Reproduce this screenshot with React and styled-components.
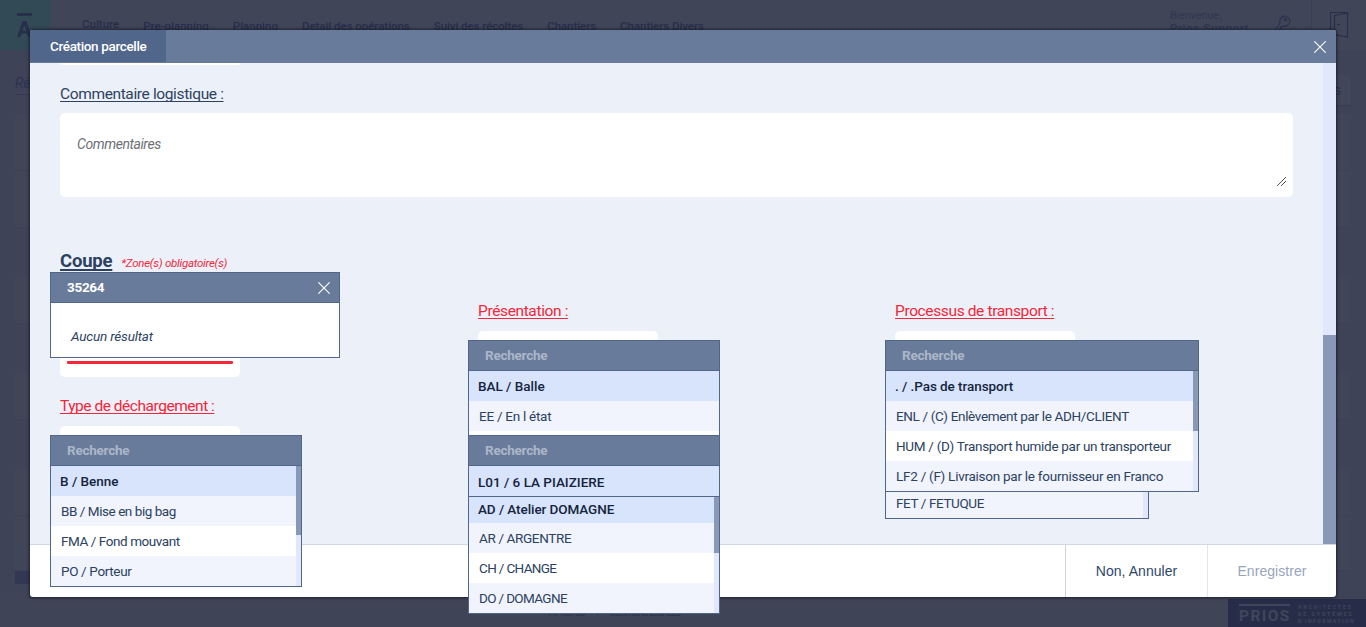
import React from "react";
import styled, { createGlobalStyle, css } from "styled-components";

const GlobalStyle = createGlobalStyle`
  * { box-sizing: border-box; }
  html, body { margin: 0; height: 100%; overflow: hidden; }
  body { font-family: Roboto, "Open Sans", sans-serif; background: #3e4357; color: #2c4261; }
`;

const Page = styled.div`
  position: relative;
  height: 627px;
  width: 1366px;
  overflow: hidden;
  display: flex;
  flex-direction: column;
  background: #3e4357;
`;

/* Dimmed application behind the dialog */
const TopBar = styled.header`
  height: 50px;
  flex: none;
  display: flex;
  background: #404558;
  color: #272d4b;
`;
const Logo = styled.div`
  width: 50px;
  height: 50px;
  background: #324a56;
  margin-right: 32px;
  svg { display: block; }
`;
const Nav = styled.nav`
  display: flex;
  gap: 24px;
  flex: 1;
`;
const NavItem = styled.span`
  font-size: 11.5px;
  font-weight: 500;
  line-height: 16px;
  white-space: nowrap;
  letter-spacing: ${(p) => p.$spacing || 0}px;
  padding-top: ${(p) => (p.$active ? 16 : 18)}px;
`;
const Welcome = styled.div`
  width: 105px;
  padding-top: 9px;
  font: 10px/13px "Liberation Sans", sans-serif;
  letter-spacing: 0.2px;
  color: #2f3550;
  b { display: block; font-size: 11px; letter-spacing: 0.45px; }
`;
const KeyCell = styled.div`
  width: 36px;
  padding-top: 15px;
`;
const DoorCell = styled.div`
  width: 55px;
  border-left: 1px solid #3a3f53;
  padding: 12px 0 0 18px;
`;
const Toolbar = styled.div`
  height: 64px;
  flex: none;
  display: flex;
  justify-content: space-between;
  padding: 25px 15px 0;
`;
const SearchHint = styled.div`
  width: 160px;
  height: 20px;
  border-bottom: 1px solid #343951;
  font-style: italic;
  font-size: 14px;
  line-height: 17px;
  color: #2e3350;
`;
const ToolButton = styled.div`
  width: 90px;
  height: 30px;
  border-radius: 2px;
  background: #414659;
  box-shadow: 0 1px 1px #363b4e;
  text-align: right;
  padding-right: 10px;
  font: 14px/31px "Liberation Sans", sans-serif;
  color: #2a304c;
`;
const Backlog = styled.div`
  flex: 1;
  padding: 0 15px;
`;
const Card = styled.div`
  height: ${(p) => p.$height}px;
  margin-bottom: ${(p) => p.$gap || 0}px;
  background: #414558;
  border-bottom: 1px solid #3c4154;
`;
const Strip = styled.div`
  height: 13px;
  width: 600px;
  background: #323754;
`;
const PageFooter = styled.footer`
  height: 28px;
  flex: none;
  display: flex;
  justify-content: flex-end;
  background: #404457;
`;
const Legal = styled.div`
  display: flex;
  gap: 12px;
  flex: 1;
  padding: 8px 0 0 549px;
  font-size: 8.5px;
  line-height: 12px;
  letter-spacing: -0.6px;
  white-space: nowrap;
  color: #2c314b;
`;
const Brand = styled.div`
  width: 138px;
  background: #272d48;
  color: #40465b;
  display: flex;
  gap: 8px;
  padding: 5px 0 0 11px;
`;
const BrandName = styled.div`
  width: 51px;
  border-top: 2px solid #40465b;
  font-size: 15.5px;
  font-weight: 700;
  line-height: 20px;
  letter-spacing: 1.4px;
`;
const BrandTag = styled.div`
  font-size: 5px;
  font-weight: 700;
  line-height: 7px;
  letter-spacing: 1.5px;
  white-space: nowrap;
  span { display: block; }
  span:nth-child(1) { letter-spacing: 2px; }
  span:nth-child(2) { letter-spacing: 2.1px; }
`;

/* Dialog */
const Dialog = styled.section`
  position: absolute;
  left: 30px;
  top: 30px;
  width: 1306px;
  height: 567px;
  border-radius: 3px;
  background: #fff;
  box-shadow: 0 0 3px 1px rgba(20, 22, 32, 0.75);
  display: flex;
  flex-direction: column;
`;
const DialogHeader = styled.div`
  height: 33px;
  flex: none;
  display: flex;
  justify-content: space-between;
  background: #687b9b;
  border-radius: 2px 2px 0 0;
`;
const DialogTab = styled.div`
  width: 136px;
  height: 32px;
  padding-left: 20px;
  background: #50668b;
  color: #fff;
  font-size: 13.5px;
  font-weight: 500;
  line-height: 33px;
  letter-spacing: -0.35px;
  border-radius: 2px 0 0 0;
`;
const CloseSlot = styled.div`
  padding: 11px 10px 0 0;
  svg { display: block; }
`;
const DialogBody = styled.div`
  height: 481px;
  flex: none;
  display: flex;
  background: #ecf1f9;
`;
const Form = styled.div`
  flex: 1;
  padding-left: 30px;
`;
const Track = styled.div`
  width: 13px;
  background: #e2e8fb;
  display: flex;
  align-items: flex-end;
`;
const Thumb = styled.div`
  width: 13px;
  height: 209px;
  background: #8798b9;
`;
const FieldTail = styled.div`
  width: 180px;
  height: 2px;
  background: #fff;
  border-radius: 0 0 5px 5px;
`;
const Label = styled.label`
  display: block;
  width: max-content;
  font-size: 15.5px;
  line-height: 20px;
  letter-spacing: ${(p) => p.$spacing ?? -0.37}px;
  color: ${(p) => (p.$required ? "#f3263a" : "#2c4261")};
  text-decoration: underline;
  text-decoration-thickness: 1px;
  text-underline-offset: 2px;
  text-decoration-skip-ink: none;
`;
const CommentLabel = styled(Label)`
  margin-top: 19px;
`;
const CommentBox = styled.div`
  width: 1233px;
  height: 84px;
  margin-top: 9px;
  padding: 21px 7px 10px 17px;
  border-radius: 5px;
  background: #fff;
  display: flex;
  justify-content: space-between;
  align-items: flex-start;
  font-size: 14px;
  font-style: italic;
  line-height: 20px;
  letter-spacing: -0.43px;
  color: #6d7075;
  svg { align-self: flex-end; display: block; }
`;
const SectionTitle = styled.div`
  display: flex;
  align-items: baseline;
  gap: 9px;
  height: 24px;
  margin-top: 52px;
`;
const SectionName = styled.h2`
  margin: 0;
  font-size: 18.5px;
  font-weight: 700;
  line-height: 24px;
  letter-spacing: -0.2px;
  text-decoration: underline;
  text-decoration-thickness: 2px;
  text-underline-offset: 2px;
  text-decoration-skip-ink: none;
`;
const Mandatory = styled.span`
  font-size: 11.5px;
  font-style: italic;
  letter-spacing: -0.27px;
  color: #f3263a;
`;
const FieldGrid = styled.div`
  display: grid;
  grid-template-columns: 418px 417px 1fr;
  grid-auto-rows: 95px;
  margin-top: 28px;
`;
const Field = styled.div`
  display: flex;
  flex-direction: column;
  justify-content: flex-end;
  gap: 10px;
  padding-bottom: 19px;
`;
const InputBox = styled.div`
  position: relative;
  width: 180px;
  height: 46px;
  padding: 30px 7px 0;
  border-radius: 5px;
  background: #fff;
`;
const ErrorLine = styled.div`
  height: 3px;
  background: #f3263a;
  border-radius: 1px;
`;

/* Drop-down lists floating over the form */
const Menu = styled.div`
  position: absolute;
  z-index: ${(p) => p.$level || 1};
  left: -10px;
  top: ${(p) => p.$top}px;
  width: ${(p) => p.$width}px;
  height: ${(p) => p.$height}px;
  border: 1px solid #50668b;
  background: #fff;
  overflow: hidden;
`;
const MenuHeader = styled.div`
  height: 30px;
  display: flex;
  justify-content: space-between;
  padding: 0 9px 0 16px;
  background: #687b9b;
  border-bottom: 1px solid #50668b;
  color: ${(p) => (p.$filled ? "#fff" : "#acb6c8")};
  font-size: 13.5px;
  font-weight: 700;
  line-height: 29px;
  letter-spacing: ${(p) => (p.$filled ? -0.3 : -0.25)}px;
  svg { display: block; margin-top: 9px; }
`;
const MenuContent = styled.div`
  display: flex;
`;
const Options = styled.ul`
  flex: 1;
  margin: 0;
  padding: 0;
  list-style: none;
`;
const Option = styled.li`
  height: 30px;
  padding-left: 10px;
  font-size: 13.5px;
  line-height: ${(p) => p.$line || 30}px;
  letter-spacing: ${(p) => p.$spacing ?? -0.3}px;
  white-space: nowrap;
  background: ${(p) => (p.$shaded ? "#f1f4fc" : "#fff")};
  ${(p) =>
    p.$selected &&
    css`
      padding-left: 9px;
      font-weight: 500;
      color: #14243f;
      background: #d8e4fb;
    `}
`;
const MenuTrack = styled.div`
  width: 5px;
  background: #e2e8fb;
`;
const MenuThumb = styled.div`
  height: ${(p) => p.$height}px;
  background: #8798b9;
`;
const Empty = styled.div`
  padding: 23px 0 0 20px;
  font-size: 13.5px;
  font-style: italic;
  line-height: 20px;
  letter-spacing: -0.18px;
`;

const DialogFooter = styled.div`
  flex: 1;
  display: flex;
  justify-content: flex-end;
  border-top: 1px solid #d3d9e3;
  border-radius: 0 0 3px 3px;
`;
const FooterButton = styled.div`
  width: ${(p) => p.$width}px;
  border-left: 1px solid ${(p) => (p.$muted ? "#e2e5eb" : "#ccd3df")};
  text-align: center;
  font: 14px/52px "Liberation Sans", Arial, sans-serif;
  letter-spacing: 0.05px;
  color: ${(p) => (p.$muted ? "#98a5bb" : "#2f4668")};
`;

const Cross = ({ size = 12 }) => (
  <svg width={size} height={size} viewBox="0 0 12 12" stroke="#fff" strokeWidth="1.1" fill="none">
    <path d="M.3.3 11.7 11.7M11.7.3.3 11.7" />
  </svg>
);

function Dropdown({ top, width, height, level, options, thumb, track = Boolean(thumb), header = true, selected = 0 }) {
  return (
    <Menu $top={top} $width={width} $height={height} $level={level}>
      {header && <MenuHeader>Recherche</MenuHeader>}
      <MenuContent>
        <Options>
          {options.map(([text, spacing, line], i) => (
            <Option
              key={text}
              $selected={i === selected}
              $shaded={(i - selected) % 2 === 1}
              $spacing={spacing}
              $line={line}
            >
              {text}
            </Option>
          ))}
        </Options>
        {track && <MenuTrack>{thumb && <MenuThumb $height={thumb} />}</MenuTrack>}
      </MenuContent>
    </Menu>
  );
}

const NAV = [
  ["Culture", 0], ["Pre-planning", 0], ["Planning", 0], ["Detail des opérations", -0.04],
  ["Suivi des récoltes", -0.07], ["Chantiers", -0.06], ["Chantiers Divers", -0.04],
];
const UNLOADING = [["B / Benne", 0], ["BB / Mise en big bag", -0.45], ["FMA / Fond mouvant", -0.43], ["PO / Porteur", -0.35]];
const PRESENTATION = [["BAL / Balle", 0], ["EE / En l état", -0.27]];
const PLACES = [["L01 / 6 LA PIAIZIERE", 0, 32]];
const SITES = [["AD / Atelier DOMAGNE", -0.08, 32], ["AR / ARGENTRE", -0.36], ["CH / CHANGE", -0.65], ["DO / DOMAGNE", -0.65]];
const TRANSPORT = [
  [". / .Pas de transport", -0.06],
  ["ENL / (C) Enlèvement par le ADH/CLIENT", -0.34],
  ["HUM / (D) Transport humide par un transporteur"],
  ["LF2 / (F) Livraison par le fournisseur en Franco", -0.26],
];
const SPECIES = [["FET / FETUQUE", -0.4]];

export default function App() {
  return (
    <Page>
      <GlobalStyle />
      <TopBar>
        <Logo>
          <svg width="50" height="50" fill="#272f4b">
            <path d="M17 13h15v3H17zM22.400 21h4L32 37h-3.600l-1.200-3.500h-5.600L20.300 37H17zm.1 9.800h3.800l-1.900-5.600z" />
          </svg>
        </Logo>
        <Nav>
          {NAV.map(([text, spacing], i) => (
            <NavItem key={text} $active={i === 0} $spacing={spacing}>{text}</NavItem>
          ))}
        </Nav>
        <Welcome>Bienvenue,<b>Prios Support</b></Welcome>
        <KeyCell>
          <svg width="17" height="20" viewBox="0 0 17 20" fill="none" stroke="#2b3150" strokeWidth="1.1">
            <path d="M5.200 8A5 5 0 1 1 8.200 10.800L7 12H5.500v2H4v2L2.500 18H.5v-3.500z" />
            <circle cx="10.500" cy="4.500" r="1.300" />
          </svg>
        </KeyCell>
        <DoorCell>
          <svg width="19" height="27" viewBox="0 0 19 27" fill="none" stroke="#272d4b" strokeWidth="1.1">
            <path d="M4.500 23.500H.5V.5h17v24.500L4.500 22.500V3.500L17.500 1M7 12.500h3" />
          </svg>
        </DoorCell>
      </TopBar>
      <Toolbar>
        <SearchHint>Récolte</SearchHint>
        <ToolButton>s</ToolButton>
      </Toolbar>
      <Backlog>
        <Card $height={57} />
        <Card $height={57} $gap={48} />
        <Card $height={48} $gap={48} />
        <Card $height={48} $gap={48} />
        <Card $height={48} />
        <Card $height={55} />
        <Strip />
      </Backlog>
      <PageFooter>
        <Legal><span>A PROPOS</span><span>|</span><span>MENTIONS LÉGALES</span></Legal>
        <Brand>
          <BrandName>PRIOS</BrandName>
          <BrandTag>
            <span>ARCHITECTES</span>
            <span>DE SYSTÈMES</span>
            <span>D'INFORMATION</span>
          </BrandTag>
        </Brand>
      </PageFooter>

      <Dialog>
        <DialogHeader>
          <DialogTab>Création parcelle</DialogTab>
          <CloseSlot><Cross /></CloseSlot>
        </DialogHeader>
        <DialogBody>
          <Form>
            <FieldTail />
            <CommentLabel>Commentaire logistique :</CommentLabel>
            <CommentBox>
              Commentaires
              <svg width="10" height="10" stroke="#555" strokeWidth="1" shapeRendering="crispEdges">
                <path d="M.5 9.500 9.500.5M4.500 9.500 9.500 4.500" />
              </svg>
            </CommentBox>
            <SectionTitle>
              <SectionName>Coupe</SectionName>
              <Mandatory>*Zone(s) obligatoire(s)</Mandatory>
            </SectionTitle>
            <FieldGrid>
              <Field>
                <InputBox>
                  <ErrorLine />
                  <Menu $top={-59} $width={290} $height={86}>
                    <MenuHeader $filled>35264<Cross /></MenuHeader>
                    <Empty>Aucun résultat</Empty>
                  </Menu>
                </InputBox>
              </Field>
              <Field>
                <Label $required>Présentation :</Label>
                <InputBox>
                  <Dropdown top={9} width={252} height={96} options={PRESENTATION} />
                </InputBox>
              </Field>
              <Field>
                <Label $required>Processus de transport :</Label>
                <InputBox>
                  <Dropdown top={9} width={314} height={152} level={4} options={TRANSPORT} thumb={60} />
                </InputBox>
              </Field>
              <Field>
                <Label $required $spacing={-0.47}>Type de déchargement :</Label>
                <InputBox>
                  <Dropdown top={9} width={252} height={152} options={UNLOADING} thumb={69} />
                </InputBox>
              </Field>
              <Field>
                <InputBox>
                  <Dropdown top={66} width={252} height={122} level={2} options={SITES} thumb={60} header={false} />
                  <Dropdown top={9} width={252} height={62} level={3} options={PLACES} />
                </InputBox>
              </Field>
              <Field>
                <InputBox>
                  <Dropdown top={61} width={264} height={32} level={2} options={SPECIES} header={false} selected={-1} track />
                </InputBox>
              </Field>
            </FieldGrid>
          </Form>
          <Track><Thumb /></Track>
        </DialogBody>
        <DialogFooter>
          <FooterButton $width={142}>Non, Annuler</FooterButton>
          <FooterButton $width={129} $muted>Enregistrer</FooterButton>
        </DialogFooter>
      </Dialog>
    </Page>
  );
}
